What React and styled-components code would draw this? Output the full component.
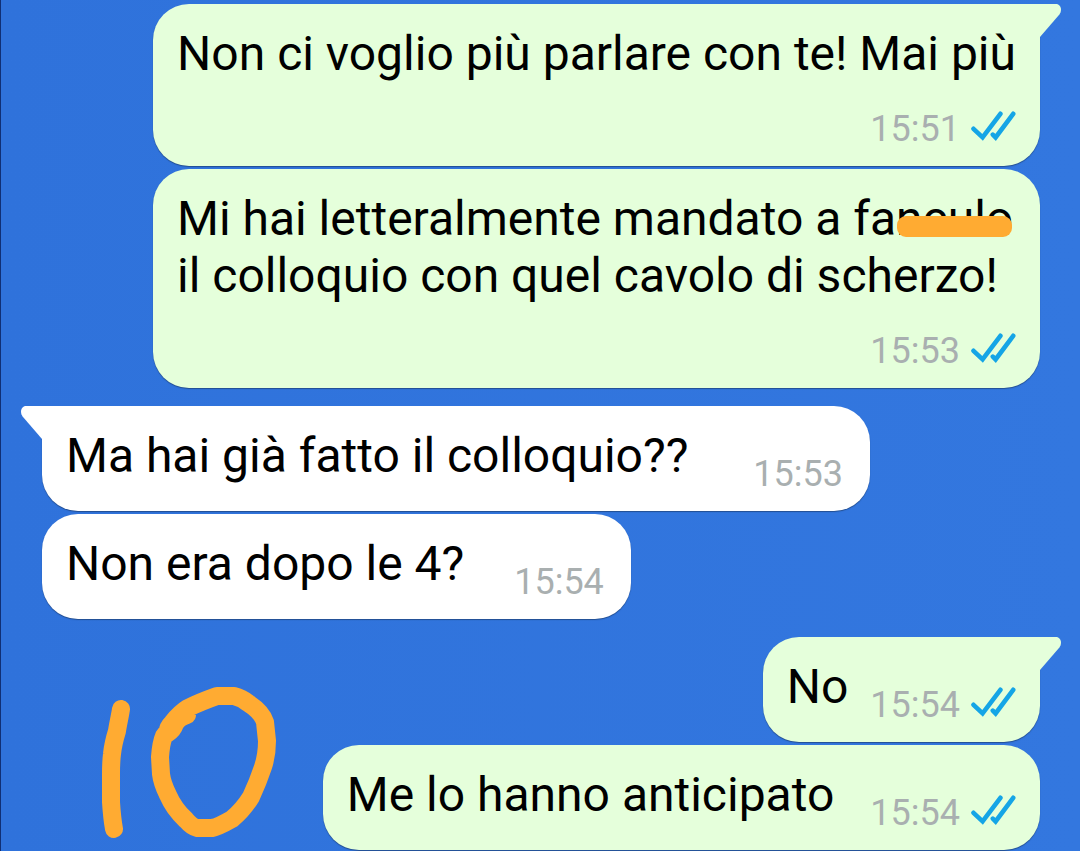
import React from "react";
import styled, { createGlobalStyle, css } from "styled-components";

const GlobalStyle = createGlobalStyle`
  *, *::before, *::after { box-sizing: border-box; }
  html { background: #3173dc; }
  body {
    margin: 0;
    font-family: Roboto, "Noto Sans", sans-serif;
    color: #000;
  }
`;

const Thread = styled.main`
  position: relative;
  display: flex;
  flex-direction: column;
  gap: 18px;
  padding: 4px 40px 1px 42px;
  overflow: hidden;
  background: linear-gradient(90deg, #2f72db, #3377df);
  box-shadow: inset 1px 0 #102f75;
`;

const Group = styled.section`
  display: flex;
  flex-direction: column;
  align-items: ${({ $sent }) => ($sent ? "flex-end" : "flex-start")};
  gap: 3px;
`;

const Bubble = styled.article`
  position: relative;
  display: flex;
  align-items: flex-end;
  max-width: calc(100% - 111px);
  padding: 21px 24px 16px;
  border-radius: 36px;
  background: #e5ffdb;
  box-shadow: 0 1px 1px rgba(20, 40, 70, 0.5);

  ${({ $sent }) =>
    !$sent &&
    css`
      padding-right: 27px;
      background: #fff;
    `}

  ${({ $tail, $sent }) =>
    $tail &&
    ($sent
      ? css`
          border-top-right-radius: 0;
        `
      : css`
          border-top-left-radius: 0;
        `)}

  gap: ${({ $gap }) => $gap}px;

  ${({ $stacked }) =>
    $stacked &&
    css`
      flex-direction: column;
      gap: 15px;
    `}
`;

const TailShape = styled.svg`
  position: absolute;
  top: 0;
  width: 22px;
  height: 33px;
  fill: ${({ $sent }) => ($sent ? "#e5ffdb" : "#fff")};
  ${({ $sent }) =>
    $sent
      ? css`
          left: calc(100% - 1px);
        `
      : css`
          right: calc(100% - 1px);
          transform: scaleX(-1);
        `}
`;

const Text = styled.p`
  margin: 0;
  padding-bottom: 11px;
  font-size: 48px;
  line-height: 57px;
`;

const Meta = styled.footer`
  display: flex;
  align-items: flex-end;
  gap: 11px;
`;

const Time = styled.time`
  font-size: 36px;
  line-height: 42px;
  color: #a9afb0;
  white-space: nowrap;
`;

const TickIcon = styled.svg`
  width: 45px;
  height: 42px;
  fill: none;
  stroke: #15a5e6;
  stroke-width: 4.6;
  stroke-linecap: round;
`;

const Censored = styled.span`
  position: relative;

  &::after {
    content: "";
    position: absolute;
    left: 1px;
    right: 1px;
    top: 26px;
    height: 21px;
    border-radius: 9px;
    background: #ffab32;
  }
`;

const Scribble = styled.svg`
  position: absolute;
  left: 80px;
  bottom: 0;
  width: 220px;
  height: 181px;
  fill: none;
  stroke: #ffab32;
  stroke-width: 18;
  stroke-linecap: round;
  stroke-linejoin: round;
`;

function Tail({ sent }) {
  return (
    <TailShape $sent={sent} viewBox="0 0 22 33" aria-hidden="true">
      <path d="M0 0H17C20 0 22 2.6 22 5.6C22 7.6 21.4 9 20.4 10.4L1 33H0Z" />
    </TailShape>
  );
}

function ReadTicks() {
  return (
    <TickIcon viewBox="0 0 45 42" role="img" aria-label="Letto">
      <path d="M2.5 20.8L11.6 29.4L29.4 5.8" />
      <path d="M21.8 26.6L24.6 29.4L42.2 5.8" />
    </TickIcon>
  );
}

function Message({ sent, tail, stacked, gap, time, children }) {
  return (
    <Bubble $sent={sent} $tail={tail} $stacked={stacked} $gap={gap}>
      {tail && <Tail sent={sent} />}
      <Text>{children}</Text>
      <Meta>
        <Time dateTime={time}>{time}</Time>
        {sent && <ReadTicks />}
      </Meta>
    </Bubble>
  );
}

export default function App() {
  return (
    <>
      <GlobalStyle />
      <Thread>
        <Group $sent>
          <Message sent tail stacked time="15:51">
            Non ci voglio più parlare con te! Mai più
          </Message>
          <Message sent stacked time="15:53">
            Mi hai letteralmente mandato a fa<Censored>nculo</Censored> il
            colloquio con quel cavolo di scherzo!
          </Message>
        </Group>
        <Group>
          <Message tail gap={65} time="15:53">
            Ma hai già fatto il colloquio??
          </Message>
          <Message gap={50} time="15:54">
            Non era dopo le 4?
          </Message>
        </Group>
        <Group $sent>
          <Message sent tail gap={22} time="15:54">
            No
          </Message>
          <Message sent gap={36} time="15:54">
            Me lo hanno anticipato
          </Message>
        </Group>
        <Scribble viewBox="0 0 220 181" role="img" aria-label="10">
          <path d="M41 39C40 46 38 54 37 61Q33 74 32 84Q31 92 31 104V132Q32 148 34 159" />
          <path d="M107 45Q98 48 95 54Q93 60 88 63Q87 58 92 53Q100 43 108 38Q120 32 137 26H154Q162 28 168 33Q182 42 185 52L187 71Q187 85 183 97Q178 112 171 127Q163 140 152 149Q138 157 132 158H117Q112 157 106 150Q94 139 88 125Q82 113 81 104L80 87Q81 73 84 66L98 47Q102 42 107 39" />
        </Scribble>
      </Thread>
    </>
  );
}
